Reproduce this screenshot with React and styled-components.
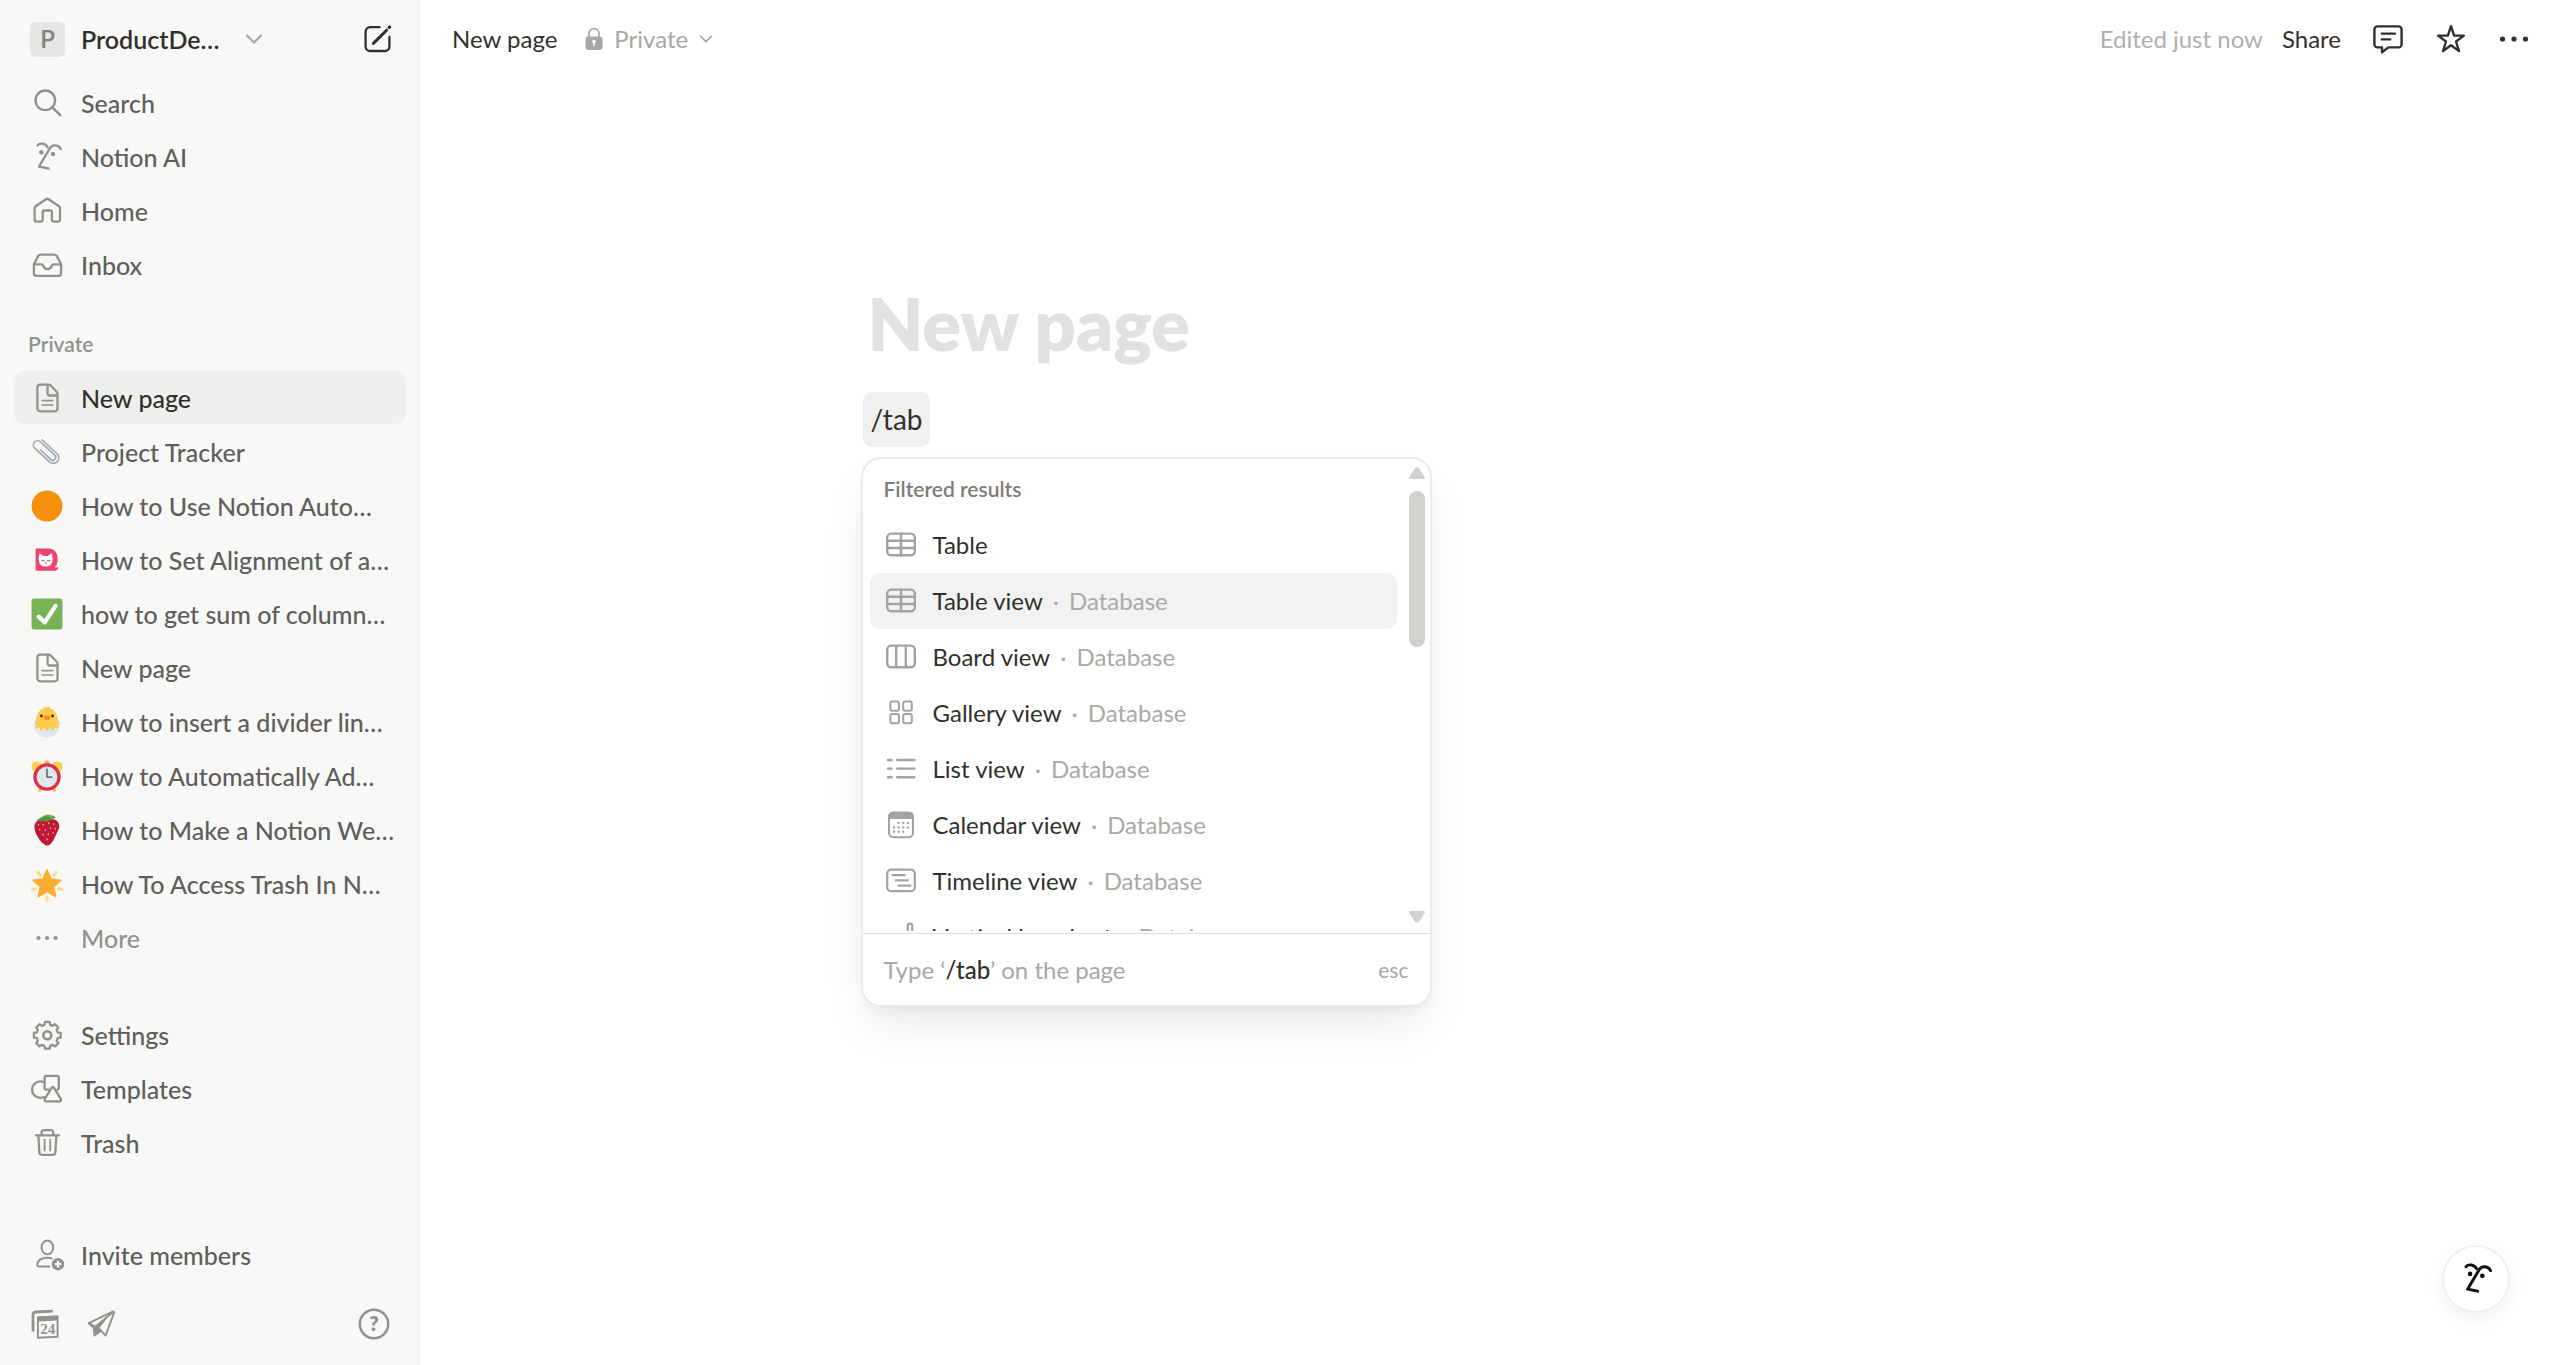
import React from "react";
import styled, { createGlobalStyle } from "styled-components";

const Global = createGlobalStyle`
  * { box-sizing: border-box; }
  body {
    margin: 0;
    background: #ffffff;
    color: #32302c;
    font-family: Lato, "Open Sans", sans-serif;
    font-size: 24px;
    line-height: 32px;
  }
  button { font: inherit; color: inherit; background: none; border: 0; padding: 0; cursor: pointer; }
  a { color: inherit; text-decoration: none; }
  ul { list-style: none; margin: 0; padding: 0; }
  svg { display: block; flex: none; }
`;

/* ---------- layout ---------- */

const Shell = styled.div`
  display: flex;
  min-height: 100vh;
`;

const Sidebar = styled.nav`
  flex: none;
  width: 420px;
  display: flex;
  flex-direction: column;
  padding: 12px 14px 14px;
  background: #f8f8f7;
  box-shadow: inset -2px 0 0 #f1f1ef;
  color: #5f5e5b;
  font-size: 25px;
  font-weight: 500;
`;

const Main = styled.main`
  flex: 1;
  min-width: 0;
`;

/* ---------- sidebar ---------- */

const Workspace = styled.div`
  display: flex;
  align-items: center;
  justify-content: space-between;
  height: 54px;
  margin-bottom: 10px;
  padding: 0 14px 0 16px;
  color: #32302c;
`;

const Switcher = styled.button`
  display: flex;
  align-items: center;
  gap: 16px;
  font-weight: 600;
`;

const WorkspaceName = styled.span`
  padding-right: 9px;
`;

const Avatar = styled.span`
  display: grid;
  place-items: center;
  width: 35px;
  height: 35px;
  border-radius: 5px;
  background: #e6e6e4;
  color: #82817d;
  font-size: 24px;
`;

const IconButton = styled.button`
  display: grid;
  place-items: center;
  width: ${(p) => p.$w || 28}px;
  height: 50px;
`;

const NavList = styled.ul`
  display: flex;
  flex-direction: column;
  gap: 1px;
  margin-bottom: ${(p) => p.$after || 0}px;
`;

const NavLink = styled.a`
  display: flex;
  align-items: center;
  gap: 16px;
  height: 53px;
  padding: 0 10px 0 15px;
  border-radius: 10px;
  white-space: nowrap;
  background: ${(p) => (p.$active ? "#efefed" : "transparent")};
  color: ${(p) => (p.$active ? "#32302c" : p.$muted ? "#91918e" : "inherit")};
  svg { color: #91918e; }
`;

const GroupLabel = styled.h2`
  margin: 0 0 12px;
  padding: 0 14px;
  font-size: 21px;
  line-height: 30px;
  font-weight: 600;
  color: #91918e;
`;

const SidebarFoot = styled.div`
  margin-top: auto;
`;

const FootBar = styled.div`
  display: flex;
  align-items: center;
  gap: 20px;
  height: 54px;
  margin-top: 16px;
  padding: 0 14px;
  color: #91918e;
`;

const Push = styled.span`
  margin-left: auto;
`;

/* ---------- top bar ---------- */

const TopBar = styled.header`
  display: flex;
  align-items: center;
  height: 77px;
  padding: 0 19px 0 22px;
`;

const Crumb = styled.a`
  padding: 0 10px;
`;

const Visibility = styled.button`
  display: flex;
  align-items: center;
  gap: 11px;
  margin-left: 18px;
  color: #a8a7a4;
`;

const Actions = styled.div`
  display: flex;
  align-items: center;
  gap: 7px;
  margin-left: auto;
`;

const Edited = styled.span`
  color: #b0afac;
`;

const Share = styled.button`
  padding: 0 12px;
`;

/* ---------- page ---------- */

const Page = styled.article`
  max-width: 1256px;
  margin: 0 auto;
  padding-top: 202px;
`;

const Title = styled.h1`
  margin: 0 0 25px;
  padding: 0 5px;
  font-size: 72px;
  line-height: 88px;
  font-weight: 800;
  color: #e1e1df;
`;

const Command = styled.p`
  width: max-content;
  margin: 0 0 12px;
  padding: 0 8px;
  border-radius: 9px;
  background: #f1f0ef;
  font-size: 28px;
  line-height: 55px;
`;

const Menu = styled.section`
  width: 567px;
  border-radius: 18px;
  background: #ffffff;
  box-shadow: 0 0 0 2px #ebebea, 0 24px 48px -8px rgba(15, 15, 15, 0.1),
    0 7px 14px -4px rgba(15, 15, 15, 0.06);
`;

const MenuScroll = styled.div`
  display: flex;
  height: 475px;
  border-bottom: 1px solid #dededc;
`;

const MenuBody = styled.div`
  flex: 1;
  overflow: hidden;
  margin-bottom: 2px;
  padding: 8px 12px 0 7px;
`;

const MenuHeading = styled.h2`
  margin: 0 0 6px;
  padding: 0 14px;
  font-size: 21px;
  line-height: 44px;
  font-weight: 600;
  color: #7d7c78;
`;

const Option = styled.button`
  display: flex;
  align-items: center;
  gap: 16px;
  width: 100%;
  height: 56px;
  padding: 0 15px;
  border-radius: 10px;
  white-space: nowrap;
  background: ${(p) => (p.$active ? "#f2f2f2" : "transparent")};
  svg { color: #a4a3a0; }
`;

const Kind = styled.span`
  color: #aaa9a6;
  &::before {
    content: "·";
    padding: 0 10px;
  }
`;

const ScrollTrack = styled.div`
  display: flex;
  flex-direction: column;
  gap: 12px;
  width: 21px;
  padding: 8px 5px 10px 0;
  color: #d3d1cb;
`;

const Thumb = styled.div`
  width: 16px;
  height: 156px;
  margin-bottom: auto;
  border-radius: 8px;
  background: #d3d1cb;
`;

const MenuFoot = styled.footer`
  display: flex;
  align-items: center;
  justify-content: space-between;
  height: 71px;
  padding: 0 21px;
  color: #a8a7a4;
  b { font-weight: 500; color: #32302c; }
  kbd { font-family: inherit; font-size: 21px; }
`;

const AiButton = styled.button`
  position: fixed;
  right: 53px;
  bottom: 54px;
  display: grid;
  place-items: center;
  width: 64px;
  height: 64px;
  border-radius: 50%;
  background: #ffffff;
  color: #111111;
  box-shadow: 0 0 0 2px #efefef, 0 7px 20px rgba(15, 15, 15, 0.07);
`;

/* ---------- icons ---------- */

const Svg = ({ s = 36, h, vb, children, w = 2.3, ...rest }) => (
  <svg
    width={s}
    height={h || s}
    viewBox={vb || `0 0 ${s} ${h || s}`}
    fill="none"
    stroke="currentColor"
    strokeWidth={w}
    strokeLinecap="round"
    strokeLinejoin="round"
    aria-hidden="true"
    {...rest}
  >
    {children}
  </svg>
);

const SearchIcon = () => (
  <Svg w={2.4}>
    <circle cx="16.3" cy="15.3" r="9.8" />
    <path d="M23.4 22.4l7.8 7.8" />
  </Svg>
);

const FaceIcon = ({ s = 36, w = 2.3 }) => (
  <Svg s={s} h={s} vb="0 0 36 36" w={w}>
    <path d="M8.5 6.4C10.6 3.8 16.2 3.8 18.5 8.2" />
    <path d="M31.8 10C29.8 6 23.8 4.6 21 9.2L10 27.6L19.6 29.5" />
    <circle cx="12.4" cy="13.2" r="2.2" fill="currentColor" stroke="none" />
    <circle cx="24" cy="15" r="2.2" fill="currentColor" stroke="none" />
  </Svg>
);

const HomeIcon = () => (
  <Svg>
    <path d="M5.6 15.2c0-.8.4-1.5 1-1.9L17 6.2a2.2 2.2 0 0 1 2.6 0L30 13.3c.6.4 1 1.1 1 1.9v11.4a2 2 0 0 1-2 2h-4.1a2 2 0 0 1-2-2v-7.4a1.7 1.7 0 0 0-1.7-1.7h-5.8a1.7 1.7 0 0 0-1.7 1.7v7.4a2 2 0 0 1-2 2H7.6a2 2 0 0 1-2-2z" />
  </Svg>
);

const InboxIcon = () => (
  <Svg>
    <path d="M4.9 17.2v9a2.6 2.6 0 0 0 2.6 2.6h22a2.6 2.6 0 0 0 2.6-2.6v-9L28 9.4a3 3 0 0 0-2.6-1.7H11.6A3 3 0 0 0 9 9.4z" />
    <path d="M5 17.4h7.6c.8 0 1.3.5 1.5 1.2a4.5 4.5 0 0 0 8.8 0c.2-.7.7-1.2 1.5-1.2H32" />
  </Svg>
);

const PageIcon = () => (
  <Svg>
    <path d="M8.4 7.5a2.8 2.8 0 0 1 2.8-2.8h8.6c.7 0 1.4.3 1.9.8l6 6.2c.5.5.8 1.2.8 1.9v14.9a2.8 2.8 0 0 1-2.8 2.8H11.2a2.8 2.8 0 0 1-2.8-2.8z" />
    <path d="M18.6 5v8.6a1.9 1.9 0 0 0 1.9 1.9h8" />
    <path d="M13.2 20.6h10.6M13.2 25h10.6" strokeWidth="1.7" />
  </Svg>
);

const gearPath = (() => {
  const teeth = 8;
  const pts = [];
  for (let i = 0; i < teeth; i++) {
    const a = (i * 2 * Math.PI) / teeth;
    [[-0.27, 10.8], [-0.17, 13.6], [0.17, 13.6], [0.27, 10.8]].forEach(([d, r]) =>
      pts.push(`${(18.3 + r * Math.sin(a + d)).toFixed(2)} ${(18.3 - r * Math.cos(a + d)).toFixed(2)}`)
    );
  }
  return `M${pts.join("L")}Z`;
})();

const GearIcon = () => (
  <Svg>
    <path d={gearPath} />
    <circle cx="18.3" cy="18.3" r="4" strokeWidth="2.6" />
  </Svg>
);

const TemplatesIcon = () => (
  <Svg>
    <path d="M14.8 11.2A8.2 8.2 0 1 0 14.9 26" />
    <path d="M20 18.7h-2.4a2 2 0 0 1-2-2V6.8a2 2 0 0 1 2-2h10.2a2 2 0 0 1 2 2v9.9a2 2 0 0 1-1.4 1.9" />
    <path d="M22.6 16.9a1.4 1.4 0 0 1 2.4 0l6.9 11.3a1.4 1.4 0 0 1-1.2 2.1H16.9a1.4 1.4 0 0 1-1.2-2.1z" />
  </Svg>
);

const TrashIcon = () => (
  <Svg>
    <path d="M7 10.4h23M12.6 10V7.4a2.2 2.2 0 0 1 2.2-2.2h7.2a2.2 2.2 0 0 1 2.2 2.2V10" />
    <path d="M9.4 10.6l.9 16.7a2.6 2.6 0 0 0 2.6 2.5h10.9a2.6 2.6 0 0 0 2.6-2.5l.9-16.7" />
    <path d="M15.6 14.8v10.6M21.2 14.8v10.6" strokeWidth="1.9" />
  </Svg>
);

const InviteIcon = () => (
  <Svg w={2}>
    <ellipse cx="18.4" cy="10.4" rx="5.8" ry="6.9" />
    <path d="M22.6 21.4c-6-2-13.8.4-14.4 6-.2 1.4.6 2.2 2 2.2h10.2" />
    <circle cx="29" cy="27.2" r="6.2" fill="currentColor" stroke="none" />
    <path d="M29 23.9v6.6M25.7 27.2h6.6" stroke="#f8f8f7" strokeWidth="2.2" strokeLinecap="butt" />
  </Svg>
);

const DotsIcon = ({ gap = 8.5, r = 2.1, s = 36 }) => (
  <Svg s={s}>
    {[-1, 0, 1].map((n) => (
      <circle key={n} cx={s / 2 + n * gap} cy={s / 2} r={r} fill="currentColor" stroke="none" />
    ))}
  </Svg>
);

const CalendarSheetsIcon = () => (
  <Svg>
    <path d="M5 25.5V9a3 3 0 0 1 2.8-3l17-.8" strokeWidth="2.8" strokeLinecap="butt" />
    <path d="M9.9 11.4L29.6 10.4v20.4l-19.7 1z" strokeWidth="1.9" />
    <path d="M9.6 10.6l20.4-1v5L9.6 15.6z" fill="currentColor" stroke="none" />
    <text x="19.8" y="27.8" textAnchor="middle" fontFamily="Liberation Serif, serif" fontWeight="700" fontSize="15" fill="currentColor" stroke="none">24</text>
  </Svg>
);

const PlaneIcon = () => (
  <Svg w={1.9}>
    <path d="M4.8 17.2L28.6 5.6a1 1 0 0 1 1.4 1.2L21.6 29.6l-5.6-6.2z" />
    <path d="M4.8 17.2l5.2 4.8L28 7" />
    <path d="M9.6 21.6L24.4 9.8 14.6 22.4l2.6 3.2-6.8 4.4z" fill="currentColor" strokeWidth="1" />
  </Svg>
);

const HelpIcon = () => (
  <Svg s={32} w={2.5}>
    <circle cx="16" cy="16" r="14.2" />
    <text x="16" y="23" textAnchor="middle" fontFamily="Lato, sans-serif" fontWeight="800" fontSize="20" fill="currentColor" stroke="none">?</text>
  </Svg>
);

const ChevronIcon = ({ s = 18 }) => (
  <Svg s={s} vb="0 0 18 18" w={2.2} color="#a8a7a4">
    <path d="M2 5.5l7 7 7-7" />
  </Svg>
);

const ComposeIcon = () => (
  <Svg s={28}>
    <path d="M15.6 2.2H6.2a4.6 4.6 0 0 0-4.6 4.6v14.6A4.6 4.6 0 0 0 6.2 26h14.6a4.6 4.6 0 0 0 4.6-4.6V12" />
    <path d="M9.4 18.4L22.6 5.2" strokeWidth="3" />
    <path d="M25.2 2.4l.4-.4" strokeWidth="3.2" />
  </Svg>
);

const LockIcon = () => (
  <Svg s={18} h={24} w={1.8}>
    <path d="M4 10V6.6a5 5 0 0 1 10 0V10" />
    <rect x=".5" y="9.4" width="17" height="13.6" rx="3" fill="currentColor" stroke="none" />
    <circle cx="9" cy="14.6" r="1.9" fill="#fff" stroke="none" />
    <path d="M9 15v3.4" stroke="#fff" strokeWidth="1.6" />
  </Svg>
);

const CommentIcon = () => (
  <Svg s={30} w={2.4}>
    <path d="M4.4 2.4h21.2a3 3 0 0 1 3 3v15a3 3 0 0 1-3 3H15.4L9 28.2v-4.8H4.4a3 3 0 0 1-3-3v-15a3 3 0 0 1 3-3z" />
    <path d="M8.8 9.6H22M8.8 15.4h8.4" />
  </Svg>
);

const StarIcon = () => (
  <Svg s={30} w={2.4}>
    <path d="M15 2.2l3.1 9.4h9.8l-7.9 5.9 3 9.5-8-5.8-8 5.8 3-9.5-7.9-5.9h9.8z" />
  </Svg>
);

const TableIcon = () => (
  <Svg s={32} w={2.4}>
    <rect x="2.2" y="4.6" width="27.6" height="21.6" rx="4" />
    <path d="M2.2 11.8h27.6M2.2 19h27.6M16 4.6v21.6" />
  </Svg>
);

const BoardIcon = () => (
  <Svg s={32} w={2.4}>
    <rect x="2.2" y="4.6" width="27.6" height="21.6" rx="4" />
    <path d="M11.2 4.6v21.6M20.8 4.6v21.6" />
  </Svg>
);

const GalleryIcon = () => (
  <Svg s={32} w={2}>
    {[[5.4, 4.6], [18.2, 4.6], [5.4, 17], [18.2, 17]].map(([x, y]) => (
      <rect key={`${x}-${y}`} x={x} y={y} width="8.6" height="9.2" rx="2" />
    ))}
  </Svg>
);

const ListIcon = () => (
  <Svg s={32} w={2.4}>
    <path d="M3 7h3.6M3 15.6h3.6M3 24.2h3.6M12.2 7H29.4M12.2 15.6H29.4M12.2 24.2H29.4" />
  </Svg>
);

const CalendarIcon = () => (
  <Svg s={32} w={2}>
    <rect x="4" y="3.6" width="24" height="24.6" rx="4.4" />
    <path d="M3.4 10V7a4 4 0 0 1 4-4h17.2a4 4 0 0 1 4 4v3z" fill="currentColor" stroke="none" />
    {[[13.6, 14], [18.2, 14], [22.8, 14], [9, 18.4], [13.6, 18.4], [18.2, 18.4], [22.8, 18.4], [9, 22.8], [13.6, 22.8], [18.2, 22.8]].map(([x, y]) => (
      <circle key={`${x}-${y}`} cx={x} cy={y} r="1.2" fill="currentColor" stroke="none" />
    ))}
  </Svg>
);

const TimelineIcon = () => (
  <Svg s={32} w={2.2}>
    <rect x="2.2" y="4.6" width="27.6" height="21.6" rx="4" />
    <path d="M7.6 10.2h12M10.8 15.4h12M13.4 20.6h12" />
  </Svg>
);

const BarChartIcon = () => (
  <Svg s={32} w={2.2}>
    <path d="M22.8 28V4.8a2.2 2.2 0 0 1 4.4 0V28M13 28V16a2.2 2.2 0 0 1 4.4 0v12M4 28v-6a2.2 2.2 0 0 1 4.4 0v6" />
  </Svg>
);

const Arrow = ({ down }) => (
  <svg width="16" height="12" viewBox="0 0 16 12" fill="currentColor" aria-hidden="true">
    <path
      d="M6 1.2a2.4 2.4 0 0 1 4 0l5.6 8.6c.6 1 .2 2.2-1 2.2H1.4c-1.2 0-1.6-1.2-1-2.2z"
      transform={down ? "rotate(180 8 6)" : undefined}
    />
  </svg>
);

/* page emoji, drawn on a 36-unit grid */
const Emoji = ({ children }) => (
  <svg width="36" height="36" viewBox="-3 -3 42 42" aria-hidden="true">
    {children}
  </svg>
);

const Paperclip = () => (
  <Emoji>
    <g transform="rotate(-47 18 18)" fill="none" stroke="#99aab5" strokeWidth="1.9" strokeLinecap="round">
      <path d="M24.5 13v15a6.5 6.5 0 0 1-13 0V4.5a5 5 0 0 1 10 0V27a3.4 3.4 0 0 1-6.8 0V11" />
      <path d="M24.5 13V4" />
    </g>
  </Emoji>
);

const OrangeDot = () => (
  <Emoji>
    <circle cx="18" cy="18" r="18" fill="#f4900c" />
  </Emoji>
);

const CatBadge = () => (
  <Emoji>
    <path d="M6 4.5h13.5C28 4.5 30.5 11 30.5 17c0 4-1.3 7.2-3.3 9.4 1.6.6 2.8.4 3.8-.6.6 3-1.6 4.7-4.6 4.7H6c-.8 0-1.3-.5-1.3-1.3V5.8c0-.8.5-1.3 1.3-1.3z" fill="#f0446e" />
    <path d="M9.5 10l4.6 3.4h4.6l4.8-3.4c1.5 5 3 15.5-7 15.5S8 15 9.5 10z" fill="#fff" />
    <path d="M12 18.5c.8.9 1.8.9 2.6 0M18.6 18.5c.8.9 1.8.9 2.6 0M15.9 21.5h1.6" stroke="#f0446e" strokeWidth="1.3" fill="none" strokeLinecap="round" />
  </Emoji>
);

const CheckMark = () => (
  <Emoji>
    <rect width="36" height="36" rx="3" fill="#77b255" />
    <path fill="#fff" d="M29.28 6.362c-1.156-.751-2.704-.422-3.458.736L14.936 23.877l-5.029-4.65c-1.014-.938-2.596-.875-3.533.138-.937 1.014-.875 2.596.139 3.533l7.209 6.666c.48.445 1.09.665 1.696.665.673 0 1.534-.282 2.099-1.139.332-.506 12.5-19.27 12.5-19.27.751-1.159.421-2.707-.737-3.458z" />
  </Emoji>
);

const Chick = () => (
  <Emoji>
    <path d="M2.2 20C3 30 9 36 18 36s15-6 15.8-16c.1-1-.6-1.8-1.6-2H3.8c-1 .2-1.7 1-1.6 2z" fill="#e1e8ed" />
    <path d="M4 17h28l-1.5 5H5.5z" fill="#99aab5" />
    <path d="M15 .6c1.2-.8 1.6.4 3 .2 1.4.2 1.8-1 3-.2 1 .6.4 1.4 1 1.7C28 4 30.5 11 31 17c.3 3.6.3 6.5-.3 9.5l-3.2-2.7-2.7 4.7-3.3-4.2L18 29l-3.5-4.7-3.3 4.2-2.7-4.7-3.2 2.7C4.7 23.5 4.7 20.6 5 17 5.5 11 8 4 14 2.3c.6-.3 0-1.1 1-1.7z" fill="#ffcc4d" />
    <circle cx="11.5" cy="11" r="1.7" fill="#662113" />
    <circle cx="24.5" cy="11" r="1.7" fill="#662113" />
    <path d="M18 10.2c2.3 0 3.6 1.3 3.6 2.7 0 1.5-1.6 2.9-3.6 2.9s-3.6-1.4-3.6-2.9c0-1.4 1.3-2.7 3.6-2.7z" fill="#f4900c" />
  </Emoji>
);

const AlarmClock = () => (
  <Emoji>
    <path d="M8.5 31.5L7.5 36h3.2l1.3-3zM27.5 31.5l1 4.5h-3.2L24 33z" fill="#ffac33" />
    <circle cx="18" cy="3" r="3" fill="#ffac33" />
    <path d="M0 7c0-3.6 2.8-6 6.2-6 2.4 0 4.6 1.2 5.3 3.3L2.8 12.5C1 11.5 0 9.5 0 7zM36 7c0-3.6-2.8-6-6.2-6-2.4 0-4.6 1.2-5.3 3.3l8.7 8.2C35 11.5 36 9.5 36 7z" fill="#ffcc4d" />
    <circle cx="18" cy="19.2" r="16" fill="#dd2e44" />
    <circle cx="18" cy="19.2" r="12.2" fill="#e1e8ed" />
    <path d="M18 10v9.2h5.5" stroke="#66757f" strokeWidth="2" fill="none" strokeLinecap="round" strokeLinejoin="round" />
  </Emoji>
);

const Strawberry = () => (
  <Emoji>
    <path d="M12 5C6 6 2.5 11 3.5 16.5 5 24 10 31 14.5 34.5c2.5 2 6 2 8-.5C27 29 28 24 31.5 17.5 34 12 31 6.5 25.5 5.5z" fill="#be1931" />
    <path d="M12.5 3c2-2.5 5-3 7.5-2.2C24 .2 26.5 1.5 28 4l-3 .5c-.5 2-2.5 3-5 2.5-1.5 1.5-4 1.8-6 .5-2 .8-5.5 1-8-1.5L9 5c.5-1.2 2-2 3.5-2z" fill="#5c913b" />
    <path d="M17 1.5c2-1 5 0 6.5 2" stroke="#77b255" strokeWidth="2.5" fill="none" strokeLinecap="round" />
    {[[8, 12], [13.5, 12], [20, 10], [26, 11], [9.5, 17.5], [16, 18], [22, 16], [27.5, 16.5], [13.5, 23.5], [19.5, 23], [25, 21.5], [18, 29]].map(([x, y]) => (
      <ellipse key={`${x}-${y}`} cx={x} cy={y} rx=".8" ry="1.3" fill="#f4abba" />
    ))}
  </Emoji>
);

const GlowingStar = () => (
  <Emoji>
    {[36, 108, 180, 252, 324].map((a) => (
      <ellipse key={a} cx="18" cy="3" rx="1.9" ry="3.8" fill="#ffd983" transform={`rotate(${a} 18 19)`} />
    ))}
    <path d="M18 1.8l4.7 10.6 11.5 1.2-8.6 7.7 2.5 11.3L18 26.8 7.9 32.6l2.5-11.3-8.6-7.7 11.5-1.2z" fill="#ffac33" stroke="#ffac33" strokeWidth="2" strokeLinejoin="round" />
  </Emoji>
);

/* ---------- content ---------- */

const primary = [
  [SearchIcon, "Search"],
  [FaceIcon, "Notion AI"],
  [HomeIcon, "Home"],
  [InboxIcon, "Inbox"],
];

const pages = [
  [PageIcon, "New page", { $active: true, "aria-current": "page" }],
  [Paperclip, "Project Tracker"],
  [OrangeDot, "How to Use Notion Auto…"],
  [CatBadge, "How to Set Alignment of a…"],
  [CheckMark, "how to get sum of column…"],
  [PageIcon, "New page"],
  [Chick, "How to insert a divider lin…"],
  [AlarmClock, "How to Automatically Ad…"],
  [Strawberry, "How to Make a Notion We…"],
  [GlowingStar, "How To Access Trash In N…"],
  [DotsIcon, "More", { $muted: true }],
];

const tools = [
  [GearIcon, "Settings"],
  [TemplatesIcon, "Templates"],
  [TrashIcon, "Trash"],
];

const options = [
  [TableIcon, "Table"],
  [TableIcon, "Table view", "Database"],
  [BoardIcon, "Board view", "Database"],
  [GalleryIcon, "Gallery view", "Database"],
  [ListIcon, "List view", "Database"],
  [CalendarIcon, "Calendar view", "Database"],
  [TimelineIcon, "Timeline view", "Database"],
  [BarChartIcon, "Vertical bar chart", "Database"],
];

const Nav = ({ items, after }) => (
  <NavList $after={after}>
    {items.map(([Icon, label, props], i) => (
      <li key={i}>
        <NavLink href="#" {...props}>
          <Icon />
          <span>{label}</span>
        </NavLink>
      </li>
    ))}
  </NavList>
);

export default function App() {
  return (
    <Shell>
      <Global />
      <Sidebar>
        <Workspace>
          <Switcher>
            <Avatar>P</Avatar>
            <WorkspaceName>ProductDe…</WorkspaceName>
            <ChevronIcon />
          </Switcher>
          <IconButton aria-label="New page">
            <ComposeIcon />
          </IconButton>
        </Workspace>
        <Nav items={primary} after={38} />
        <GroupLabel>Private</GroupLabel>
        <Nav items={pages} after={44} />
        <Nav items={tools} />
        <SidebarFoot>
          <Nav items={[[InviteIcon, "Invite members"]]} />
          <FootBar>
            <IconButton aria-label="Calendar" $w={36}>
              <CalendarSheetsIcon />
            </IconButton>
            <IconButton aria-label="Send" $w={36}>
              <PlaneIcon />
            </IconButton>
            <Push>
              <IconButton aria-label="Help" $w={36}>
                <HelpIcon />
              </IconButton>
            </Push>
          </FootBar>
        </SidebarFoot>
      </Sidebar>
      <Main>
        <TopBar>
          <Crumb href="#">New page</Crumb>
          <Visibility>
            <LockIcon />
            <span>Private</span>
            <ChevronIcon s={14} />
          </Visibility>
          <Actions>
            <Edited>Edited just now</Edited>
            <Share>Share</Share>
            <IconButton aria-label="Comments" $w={56}>
              <CommentIcon />
            </IconButton>
            <IconButton aria-label="Favorite" $w={56}>
              <StarIcon />
            </IconButton>
            <IconButton aria-label="More actions" $w={56}>
              <DotsIcon gap={11.5} r={2.6} />
            </IconButton>
          </Actions>
        </TopBar>
        <Page>
          <Title>New page</Title>
          <Command>/tab</Command>
          <Menu>
            <MenuScroll>
              <MenuBody>
                <MenuHeading>Filtered results</MenuHeading>
                {options.map(([Icon, label, kind], i) => (
                  <Option key={label} $active={i === 1}>
                    <Icon />
                    <span>
                      {label}
                      {kind && <Kind>{kind}</Kind>}
                    </span>
                  </Option>
                ))}
              </MenuBody>
              <ScrollTrack aria-hidden="true">
                <Arrow />
                <Thumb />
                <Arrow down />
              </ScrollTrack>
            </MenuScroll>
            <MenuFoot>
              <span>
                Type ‘<b>/tab</b>’ on the page
              </span>
              <kbd>esc</kbd>
            </MenuFoot>
          </Menu>
        </Page>
      </Main>
      <AiButton aria-label="Ask AI">
        <FaceIcon s={38} w={2.8} />
      </AiButton>
    </Shell>
  );
}
